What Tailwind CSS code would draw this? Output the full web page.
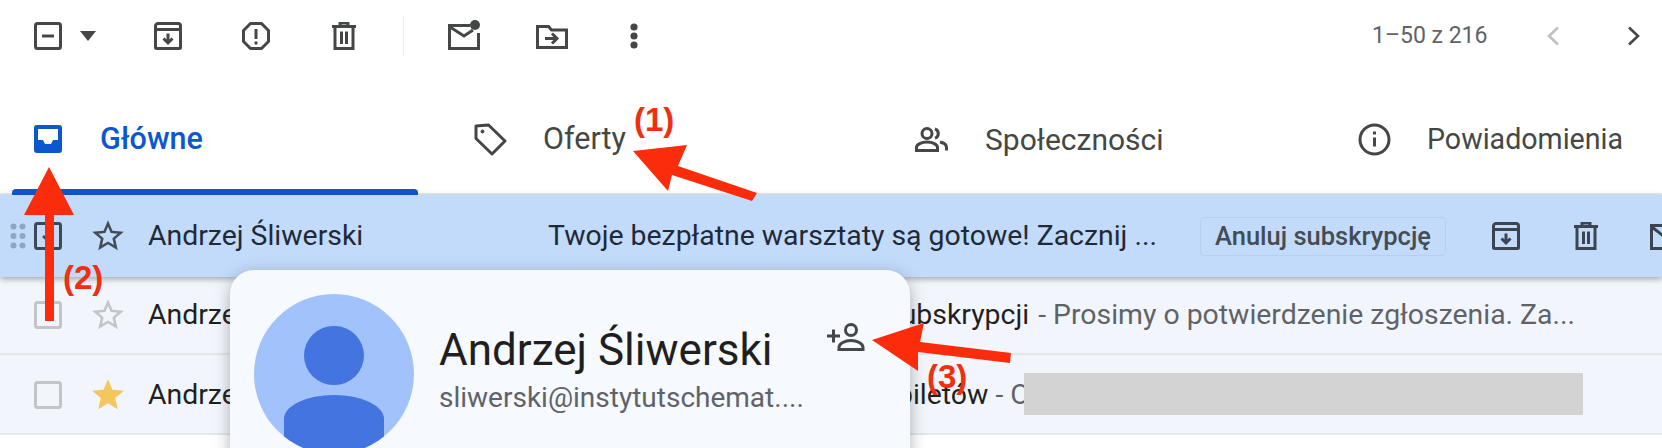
<!DOCTYPE html>
<html lang="pl">
<head>
<meta charset="utf-8">
<script src="https://cdn.jsdelivr.net/npm/@tailwindcss/browser@4"></script>
</head>
<body class="bg-white">
<div class="relative w-[1662px] h-[448px] overflow-hidden bg-white font-['Roboto',sans-serif] text-[#1f2937]">

  <!-- toolbar -->
  <div class="flex items-center h-[72px] text-[#444746]">
    <svg class="ml-[34px] w-[28px] h-[28px]" viewBox="0 0 28 28" fill="none" stroke="currentColor" stroke-width="3"><rect x="1.5" y="1.5" width="25" height="25" rx="2"/><path d="M8 14h12"/></svg>
    <svg class="ml-[18px] w-[16px] h-[10px]" viewBox="0 0 16 10" fill="currentColor"><path d="M0 0h16L8 10z"/></svg>
    <svg class="ml-[58px] w-[28px] h-[28px]" viewBox="0 0 28 28" fill="none" stroke="currentColor" stroke-width="3"><path d="M4 1.500h20a2.500 2.500 0 0 1 2.500 2.500v21.500a1 1 0 0 1-1 1h-23a1 1 0 0 1-1-1V4A2.500 2.500 0 0 1 4 1.500zM1.500 7.500h25M14 11.500v9M9.500 16.500l4.500 4.500 4.500-4.500"/></svg>
    <svg class="ml-[60px] w-[28px] h-[28px]" viewBox="0 0 28 28" fill="none" stroke="currentColor" stroke-width="3"><path d="M8.5 1.5h11l7 7v11l-7 7h-11l-7-7v-11zM14 7v10"/><circle cx="14" cy="21" r="1" fill="currentColor" stroke-width="1.5"/></svg>
    <svg class="ml-[62px] w-[24px] h-[28px]" viewBox="0 0 24 28" fill="none" stroke="currentColor" stroke-width="3"><path d="M0 4.500h24M8 4V1h8v3M3 5v21.500h18V5M9.500 9.500v12.500M14.500 9.500v12.500"/></svg>
    <div class="ml-[47px] w-[1px] h-[40px] bg-[#eceeef]"></div>
    <svg class="ml-[44px] w-[33px] h-[30px] -mt-[2px]" viewBox="0 0 33 30" fill="none" stroke="currentColor" stroke-width="3"><path d="M22 5.5H1.5v23h29V13M2 7l14 9 9-6"/><circle cx="27" cy="5" r="5" fill="currentColor" stroke="none"/></svg>
    <svg class="ml-[55px] w-[32px] h-[24px] mt-[1px]" viewBox="0 0 32 24" fill="none" stroke="currentColor" stroke-width="3"><path d="M1.5 22.5V1.5h11l3 3.5h15v17.500zM9 13.500h12M16 8.500l5 5-5 5"/></svg>
    <svg class="ml-[62px] w-[8px] h-[26px]" viewBox="0 0 8 26" fill="currentColor"><circle cx="4" cy="4" r="3.6"/><circle cx="4" cy="13" r="3.6"/><circle cx="4" cy="22" r="3.6"/></svg>
    <span class="ml-auto text-[23px] font-normal text-[#5f6368] w-[174px] whitespace-nowrap">1–50 z 216</span>
    <svg class="w-[14px] h-[20px]" viewBox="0 0 14 20" fill="none" stroke="#bdc1c6" stroke-width="2.6"><path d="M12 1.5 3 10l9 8.5"/></svg>
    <svg class="ml-[67px] mr-[21px] w-[14px] h-[20px]" viewBox="0 0 14 20" fill="none" stroke="#444746" stroke-width="2.6"><path d="M2 1.5 11 10l-9 8.5"/></svg>
  </div>

  <!-- tabs -->
  <div class="flex h-[123px] pl-[12px] border-b-[2px] border-[#e8eaed] text-[#444746]">
    <div class="relative w-[441px] flex items-center text-[#0b57d0] font-medium text-[30.5px] pt-[13px]">
      <svg class="ml-[22px] w-[28px] h-[28px]" viewBox="0 0 28 28"><rect width="28" height="28" rx="3" fill="#0b57d0"/><path d="M4 4h20v11h-5l-2 4h-6l-2-4H4z" fill="#fff"/></svg>
      <span class="ml-[38px]">Główne</span>
      <div class="absolute left-0 bottom-[-2px] w-[406px] h-[6px] bg-[#0b57d0] rounded-t-[4px]"></div>
    </div>
    <div class="w-[441px] flex items-center text-[30.5px] pt-[13px]">
      <svg class="ml-[21px] w-[33px] h-[33px]" viewBox="0 0 33 33" fill="none" stroke="currentColor" stroke-width="3" stroke-linejoin="round"><path d="M2 3 14.500 2 31 18 18 31 2 15.500z"/><circle cx="8.500" cy="8.500" r="1.500" fill="currentColor" stroke-width="1"/></svg>
      <span class="ml-[36px]">Oferty</span>
    </div>
    <div class="w-[442px] flex items-center text-[30px] pt-[13px]">
      <svg class="ml-[21px] w-[33px] h-[25px]" viewBox="0 0 33 25" fill="none" stroke="currentColor" stroke-width="3"><circle cx="12" cy="6.5" r="5"/><path d="M20 1.800a5 5 0 0 1 0 9.400M1.500 23.500v-3c0-3 5-5.500 10.500-5.500s10.500 2.500 10.500 5.500v3zM25 15c3.500.8 6.500 2.500 6.500 5.500v3"/></svg>
      <span class="ml-[37px]">Społeczności</span>
    </div>
    <div class="flex items-center text-[28.6px] pt-[13px]">
      <svg class="ml-[22px] w-[33px] h-[33px]" viewBox="0 0 33 33" fill="none" stroke="currentColor" stroke-width="3"><circle cx="16.500" cy="16.500" r="14.500"/><path d="M16.500 14.500v9M16.500 8.500v3"/></svg>
      <span class="ml-[36px]">Powiadomienia</span>
    </div>
  </div>

  <!-- rows -->
  <div class="flex items-center relative h-[82px] w-[1662px] bg-[#c2dbfb] shadow-[0_2px_6px_rgba(60,64,67,0.45)] z-10 text-[28.4px]">
    <svg class="shrink-0 ml-[10px] w-[16px] h-[26px] mr-[8px]" viewBox="0 0 16 26" fill="#8ea6c2"><circle cx="3.500" cy="3.500" r="3"/><circle cx="12.500" cy="3.500" r="3"/><circle cx="3.500" cy="13" r="3"/><circle cx="12.500" cy="13" r="3"/><circle cx="3.500" cy="22.500" r="3"/><circle cx="12.500" cy="22.500" r="3"/></svg>
    <svg class="shrink-0 w-[28px] h-[28px]" viewBox="0 0 28 28" fill="none" stroke="#3c4a57" stroke-width="3"><rect x="1.500" y="1.500" width="25" height="25" rx="2"/><path d="M9 14l4 4 6-7" stroke-width="2.500"/></svg>
    <svg class="shrink-0 ml-[27px] w-[38px] h-[38px]" viewBox="0 0 24 24" fill="#444c54"><path d="M22 9.240l-7.190-.62L12 2 9.190 8.630 2 9.240l5.460 4.730L5.820 21 12 17.270 18.180 21l-1.630-7.030L22 9.240zM12 15.400l-3.760 2.270 1-4.280-3.320-2.880 4.380-.38L12 6.100l1.710 4.040 4.380.38-3.320 2.880 1 4.280L12 15.400z"/></svg>
    <span class="shrink-0 ml-[21px] w-[400px] text-[#1f2937]">Andrzej Śliwerski</span>
    <span class="shrink-0 w-[652px] whitespace-nowrap text-[#1f2937]">Twoje bezpłatne warsztaty są gotowe! Zacznij ...</span>
    <span class="shrink-0 w-[246px] h-[39px] flex items-center justify-center border border-[#b9d0ec] rounded-[4px] text-[25.5px] text-[#444c54] font-medium whitespace-nowrap">Anuluj subskrypcję</span>
    <svg class="shrink-0 ml-[46px] w-[28px] h-[28px]" viewBox="0 0 28 28" fill="none" stroke="#3c4450" stroke-width="3"><path d="M4 1.500h20a2.500 2.500 0 0 1 2.500 2.500v21.500a1 1 0 0 1-1 1h-23a1 1 0 0 1-1-1V4A2.500 2.500 0 0 1 4 1.500zM1.500 7.500h25M14 11.500v9M9.500 16.500l4.500 4.500 4.500-4.500"/></svg>
    <svg class="shrink-0 ml-[54px] w-[24px] h-[28px]" viewBox="0 0 24 28" fill="none" stroke="#3c4450" stroke-width="3"><path d="M0 4.500h24M8 4V1h8v3M3 5v21.500h18V5M9.500 9.500v12.500M14.500 9.500v12.500"/></svg>
    <svg class="shrink-0 ml-[52px] w-[28px] h-[28px]" viewBox="0 0 28 28" fill="none" stroke="#3c4450" stroke-width="3"><path d="M1.500 3.500h29v23h-29zM2 5l14 11 14-11"/></svg>
  </div>

  <div class="flex items-center h-[78px] bg-[#f2f6fc] border-b-[2px] border-[#e3e6ea] text-[28.4px] pl-[34px]">
    <svg class="w-[28px] h-[28px]" viewBox="0 0 28 28" fill="none" stroke="#c1c4c8" stroke-width="3"><rect x="1.500" y="1.500" width="25" height="25" rx="2"/></svg>
    <svg class="ml-[27px] w-[38px] h-[38px]" viewBox="0 0 24 24" fill="#c1c4c8"><path d="M22 9.240l-7.190-.62L12 2 9.190 8.630 2 9.240l5.460 4.730L5.820 21 12 17.270 18.180 21l-1.630-7.030L22 9.240zM12 15.400l-3.760 2.270 1-4.280-3.320-2.880 4.380-.38L12 6.100l1.710 4.040 4.380.38-3.320 2.880 1 4.280L12 15.400z"/></svg>
    <span class="ml-[21px] w-[738px] text-[#1f1f1f]">Andrzej Śliwerski</span>
    <span class="whitespace-nowrap text-[#1f1f1f]">subskrypcji <span class="ml-[2px] text-[#5f6368]">- Prosimy o potwierdzenie zgłoszenia. Za...</span></span>
  </div>

  <div class="relative flex items-center h-[80px] pt-[2px] bg-[#f2f6fc] border-b-[2px] border-[#e3e6ea] text-[28.4px] pl-[34px]">
    <svg class="w-[28px] h-[28px]" viewBox="0 0 28 28" fill="none" stroke="#c1c4c8" stroke-width="3"><rect x="1.500" y="1.500" width="25" height="25" rx="2"/></svg>
    <svg class="ml-[27px] w-[38px] h-[38px]" viewBox="0 0 24 24" fill="#f5c55e"><path d="M12 2l2.810 6.620 7.190.62-5.450 4.730L18.180 21 12 17.270 5.820 21l1.640-7.030L2 9.240l7.190-.62z"/></svg>
    <span class="ml-[21px] w-[749px] text-[#1f1f1f]">Andrzej Śliwerski</span>
    <span class="whitespace-nowrap text-[#1f1f1f]">biletów <span class="text-[#5f6368]">- O</span></span>
    <div class="absolute left-[1024px] top-[18px] w-[559px] h-[42px] bg-[#d3d3d3]"></div>
  </div>

  <!-- contact card -->
  <div class="absolute z-20 left-[230px] top-[270px] w-[680px] h-[220px] bg-[#f6f9fe] rounded-[24px] shadow-[0_4px_16px_rgba(60,64,67,0.4)] flex items-start pl-[24px] pt-[24px]">
    <div class="relative w-[160px] h-[160px] shrink-0 rounded-full bg-[#a1c2fa] overflow-hidden">
      <div class="absolute left-[50px] top-[32px] w-[60px] h-[59px] rounded-full bg-[#4374e0]"></div>
      <div class="absolute left-[30px] top-[101px] w-[100px] h-[80px] rounded-t-[50px_24px] bg-[#4374e0]"></div>
    </div>
    <div class="ml-[25px] mt-[30px] w-[380px]">
      <div class="text-[44px] leading-[52px] text-[#1f1f1f] whitespace-nowrap">Andrzej Śliwerski</div>
      <div class="text-[28px] leading-[36px] mt-[4px] text-[#5f6368] whitespace-nowrap">sliwerski@instytutschemat....</div>
    </div>
    <svg class="ml-[8px] mt-[29px] w-[38px] h-[28px]" viewBox="0 0 38 28" fill="none" stroke="#444746" stroke-width="3"><path d="M0 13h13M6.500 6.500v13"/><circle cx="24" cy="7" r="5.500"/><path d="M12 26.500v-2c0-4 6-7 12-7s12 3 12 7v2z"/></svg>
  </div>

  <!-- annotations -->
  <svg class="absolute z-30 left-0 top-0 w-[1662px] h-[448px]" viewBox="0 0 1662 448" fill="#fb2c0c">
    <path d="M633 151 687 145 678 166 757 193 752 201 672 175 668 191z"/>
    <path d="M49 167 74 215H54V321H45V215H24z"/>
    <path d="M872 340 924 323 920 342 1011 353 1010 363 918 352 918 371z"/>
  </svg>
  <span class="absolute z-30 left-[634px] top-[102px] text-[33px] leading-[36px] font-bold font-['Liberation_Sans',sans-serif] text-[#ee2f10]">(1)</span>
  <span class="absolute z-30 left-[63px] top-[260px] text-[33px] leading-[36px] font-bold font-['Liberation_Sans',sans-serif] text-[#ee2f10]">(2)</span>
  <span class="absolute z-30 left-[927px] top-[359px] text-[33px] leading-[36px] font-bold font-['Liberation_Sans',sans-serif] text-[#ee2f10]">(3)</span>
</div>
</body>
</html>
